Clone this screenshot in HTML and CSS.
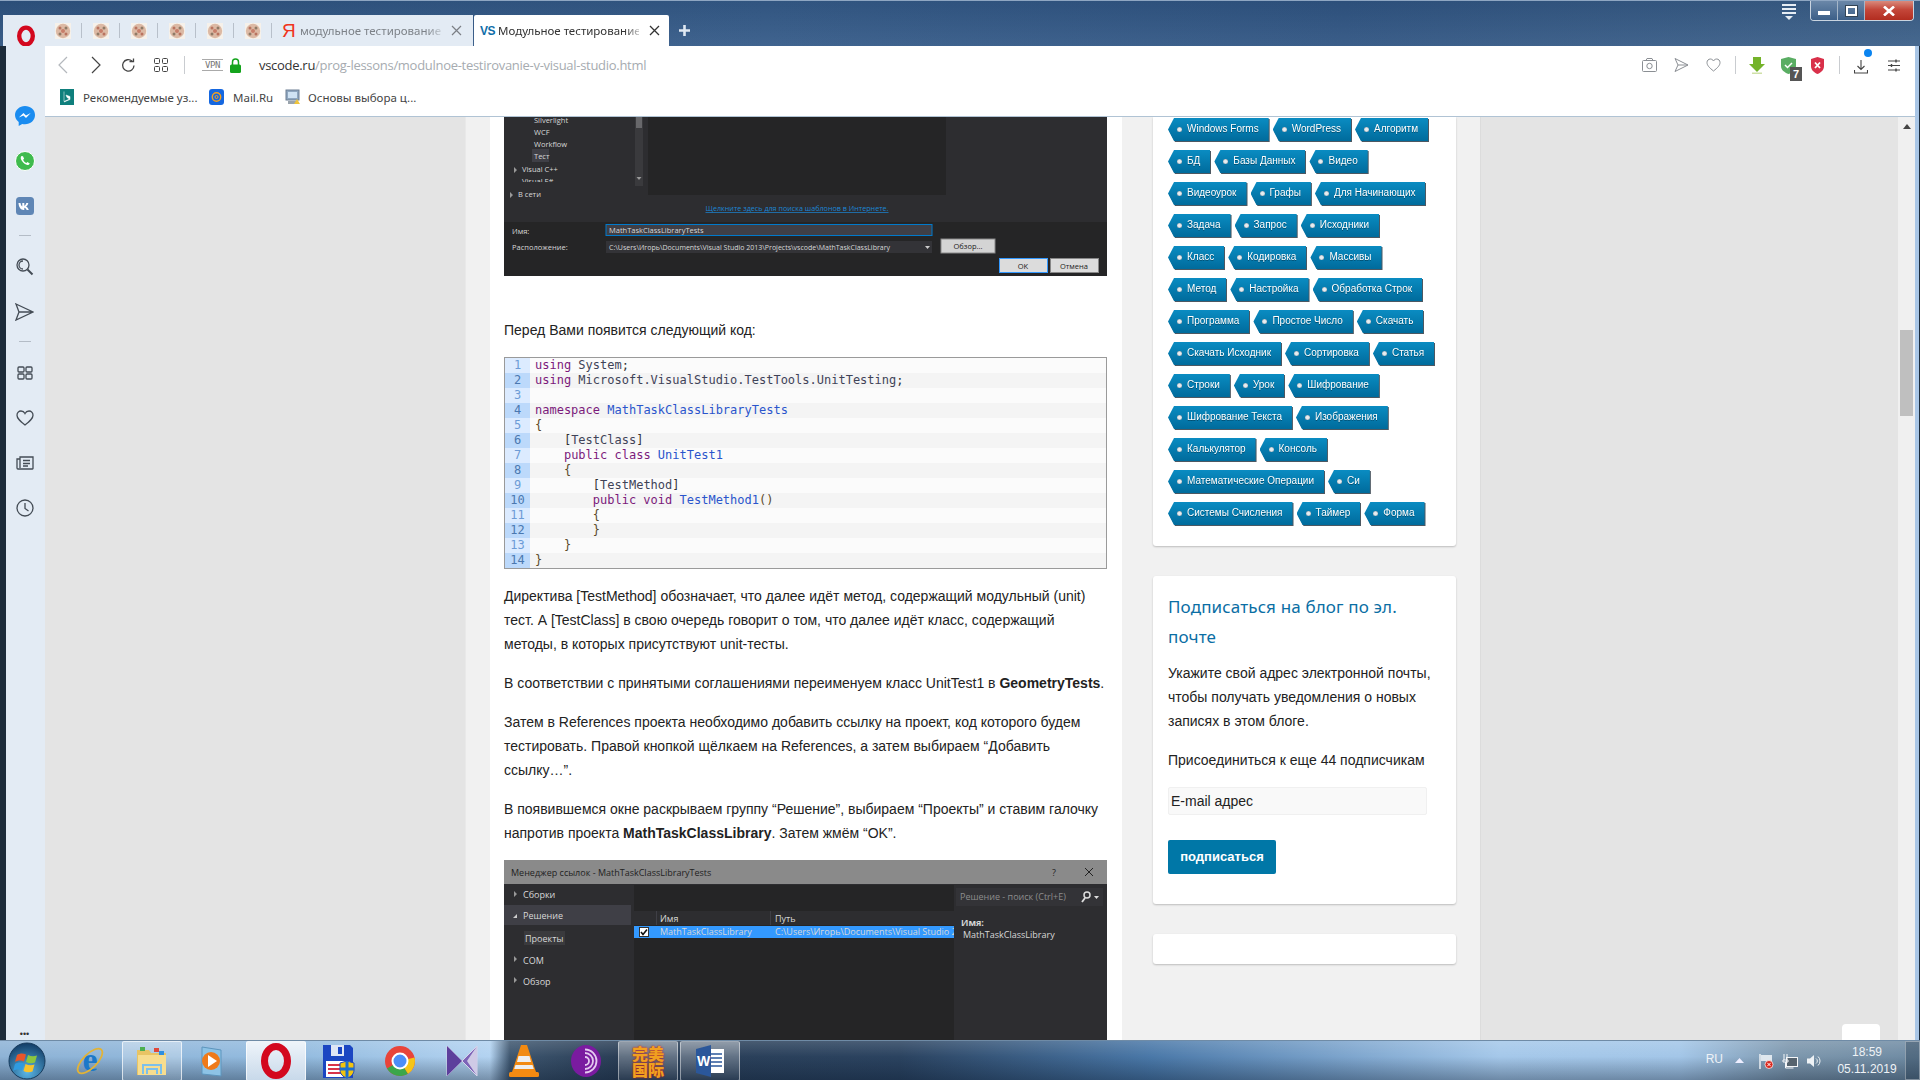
FILE: index.html
```html
<!DOCTYPE html>
<html lang="ru">
<head>
<meta charset="utf-8">
<title>Модульное тестирование</title>
<link rel="stylesheet" href="styles.css">
</head>
<body>
<svg class="defs" width="0" height="0">
  <symbol id="fav" viewBox="0 0 16 16">
    <rect width="16" height="16" fill="#f6f1ea"/>
    <circle cx="8" cy="8" r="7.200" fill="#dcb9a4"/>
    <circle cx="5" cy="5" r="1.500" fill="#b9735f"/><circle cx="11" cy="5" r="1.500" fill="#8f7a66"/>
    <circle cx="8" cy="8" r="2" fill="#c77e6a"/><circle cx="5" cy="11" r="1.500" fill="#8f7a66"/><circle cx="11" cy="11" r="1.500" fill="#b9735f"/>
  </symbol>
</svg>
<div class="window">
  <header class="head">
    <div class="strip">
      <svg class="logo" width="20" height="22" viewBox="0 0 20 22"><ellipse cx="10" cy="11" rx="6.800" ry="8.400" fill="none" stroke="#d3081e" stroke-width="4.400"/></svg>
      <div class="pin"><svg width="16" height="16"><use href="#fav"/></svg></div>
      <div class="pin"><svg width="16" height="16"><use href="#fav"/></svg></div>
      <div class="pin"><svg width="16" height="16"><use href="#fav"/></svg></div>
      <div class="pin"><svg width="16" height="16"><use href="#fav"/></svg></div>
      <div class="pin"><svg width="16" height="16"><use href="#fav"/></svg></div>
      <div class="pin"><svg width="16" height="16"><use href="#fav"/></svg></div>
      <div class="tab">
        <span class="ya">Я</span>
        <span class="tab-text muted">модульное тестирование</span>
        <svg class="tab-x" width="11" height="11" viewBox="0 0 11 11"><path d="M1 1l9 9M10 1l-9 9" stroke="#7b7f85" stroke-width="1.200"/></svg>
      </div>
      <div class="tab active">
        <span class="vs">VS</span>
        <span class="tab-text">Модульное тестирование</span>
        <svg class="tab-x" width="11" height="11" viewBox="0 0 11 11"><path d="M1 1l9 9M10 1l-9 9" stroke="#333" stroke-width="1.300"/></svg>
      </div>
      <svg class="plus" width="11" height="11" viewBox="0 0 11 11"><path d="M5.500 0v11M0 5.500h11" stroke="#dfe8f2" stroke-width="2.600"/></svg>
    </div>
    <svg class="easy" width="14" height="16" viewBox="0 0 14 16"><path d="M0 1h14M0 5h14M0 9h14" stroke="#e6edf4" stroke-width="2"/><path d="M3 12h8l-4 4z" fill="#e6edf4"/></svg>
    <div class="ctrls">
      <div class="ctl"><span class="ctl-min"></span></div>
      <div class="ctl"><span class="ctl-max"></span></div>
      <div class="ctl ctl-close"><svg width="12" height="10" viewBox="0 0 12 10"><path d="M1 0.500l10 9M11 0.500l-10 9" stroke="#fff" stroke-width="2.600"/></svg></div>
    </div>
  </header>
  <div class="below">
    <aside class="rail">
      <div class="rail-i"><svg width="20" height="20" viewBox="0 0 20 20"><path d="M10 0C4.500 0 0 4 0 9c0 2.900 1.500 5.300 3.700 7v4l3.500-2c.9.200 1.800.300 2.800.300 5.500 0 10-4 10-9.300S15.500 0 10 0z" fill="#1a8cf0"/><path d="M3.800 11.500L8.500 7l2.500 2.500L15.700 7l-4.700 5-2.500-2.500z" fill="#fff"/></svg></div>
      <div class="rail-i"><svg width="20" height="20" viewBox="0 0 20 20"><circle cx="10" cy="10" r="9.500" fill="#3fbb4e" stroke="#fff"/><path d="M6.500 5c-1.200 1.200-1 3 .5 5s3.500 3.800 5.500 4c1 .1 2-.7 2.300-1.600l-2.400-1.300-1 1c-1.500-.6-2.700-1.800-3.300-3.300l1-1L8 5.200z" fill="#fff"/></svg></div>
      <div class="rail-i"><svg width="18" height="18" viewBox="0 0 18 18"><rect width="18" height="18" rx="3.500" fill="#5f86b5"/><path d="M2.500 6h2c.3 1.700 1 3 1.800 3.500V6h2v2.800c.9-.3 1.700-1.500 2-2.800h2c-.3 1.700-1.300 3-2.300 3.600 1.200.6 2.200 1.700 2.800 3.300h-2.100c-.5-1.200-1.300-2-2.400-2.200v2.200h-.6c-3 0-4.900-2.500-5.200-6.900z" fill="#fff"/></svg></div>
      <div class="rail-sep"><span></span></div>
      <div class="rail-i rail-gap"><svg width="18" height="18" viewBox="0 0 18 18" fill="none" stroke="#444c55" stroke-width="1.300"><circle cx="7" cy="7" r="6"/><path d="M7 3a4 4 0 0 0 0 8"/><path d="M11.500 11.500l5 5" stroke-width="2"/></svg></div>
      <div class="rail-i"><svg width="19" height="18" viewBox="0 0 19 18" fill="none" stroke="#444c55" stroke-width="1.300"><path d="M1 1l17 8-17 8 3-8zM4 9h14"/></svg></div>
      <div class="rail-sep"><span></span></div>
      <div class="rail-i rail-gap"><svg width="16" height="14" viewBox="0 0 16 14" fill="none" stroke="#444c55" stroke-width="1.300"><rect x="1" y="1" width="6" height="5" rx="1"/><rect x="9" y="1" width="6" height="5" rx="1"/><rect x="1" y="8" width="6" height="5" rx="1"/><rect x="9" y="8" width="6" height="5" rx="1"/></svg></div>
      <div class="rail-i"><svg width="18" height="16" viewBox="0 0 18 16" fill="none" stroke="#444c55" stroke-width="1.300"><path d="M9 15C4 11 1 8.500 1 5.200 1 2.800 2.800 1 5 1c1.700 0 3.200 1 4 2.500C9.800 2 11.300 1 13 1c2.200 0 4 1.800 4 4.200 0 3.300-3 5.800-8 9.800z"/></svg></div>
      <div class="rail-i"><svg width="18" height="14" viewBox="0 0 18 14" fill="none" stroke="#444c55" stroke-width="1.300"><path d="M4 2.500V1h13v11.500a.5.500 0 0 1-.5.500H2a1 1 0 0 1-1-1V3h3v9"/><path d="M7 4.500h7M7 7.500h7M7 10h5"/></svg></div>
      <div class="rail-i"><svg width="18" height="18" viewBox="0 0 18 18" fill="none" stroke="#444c55" stroke-width="1.300"><circle cx="9" cy="9" r="8"/><path d="M9 4v5.500l3.500 2.500"/></svg></div>
      <div class="rail-dots">•••</div>
    </aside>
    <div class="mainpane">
      <div class="toolbar">
        <div class="addr">
          <svg class="nav nav-back" width="10" height="18" viewBox="0 0 10 18"><path d="M9 1L1 9l8 8" fill="none" stroke="#b4b8bd" stroke-width="1.200"/></svg>
          <svg class="nav nav-fwd" width="10" height="18" viewBox="0 0 10 18"><path d="M1 1l8 8-8 8" fill="none" stroke="#444" stroke-width="1.200"/></svg>
          <svg class="nav nav-rel" width="15" height="15" viewBox="0 0 15 15" fill="none" stroke="#444" stroke-width="1.300"><path d="M13 7.500A5.700 5.700 0 1 1 11 3"/><path d="M8.500 3.500h4v-3" stroke-linejoin="miter"/></svg>
          <svg class="nav nav-grid" width="14" height="14" viewBox="0 0 14 14" fill="none" stroke="#444" stroke-width="1"><rect x=".5" y=".5" width="5" height="5" rx="1"/><rect x="8.500" y=".5" width="5" height="5" rx="1"/><rect x=".5" y="8.500" width="5" height="5" rx="1"/><rect x="8.500" y="8.500" width="5" height="5" rx="1"/></svg>
          <span class="tb-sep"></span>
          <span class="vpn">VPN</span>
          <svg class="lock" width="11" height="15" viewBox="0 0 11 15"><path d="M2.500 7V4a3 3 0 0 1 6 0v3" fill="none" stroke="#14a41c" stroke-width="1.500"/><rect y="6.500" width="11" height="8.500" rx="1.500" fill="#14a41c"/></svg>
          <span class="url"><b>vscode.ru</b>/prog-lessons/modulnoe-testirovanie-v-visual-studio.html</span>
          <div class="tools">
            <svg class="t-cam" width="15" height="14" viewBox="0 0 15 14" fill="none" stroke="#8b8f94"><rect x=".5" y="2.500" width="14" height="11" rx="1"/><path d="M4 2.500L5 .5h5l1 2"/><circle cx="7.500" cy="8" r="2.700"/></svg>
            <svg class="t-send" width="15" height="14" viewBox="0 0 15 14" fill="none" stroke="#8b8f94"><path d="M1 .5l13 6.500-13 6.500 3-6.500zM4 7h10"/></svg>
            <svg class="t-heart" width="15" height="14" viewBox="0 0 15 14" fill="none" stroke="#8b8f94"><path d="M7.500 13C3.500 9.800 1 7.500 1 4.500 1 2.500 2.500 1 4.300 1c1.400 0 2.600.8 3.200 2 .6-1.200 1.800-2 3.200-2C12.500 1 14 2.500 14 4.500c0 3-2.500 5.300-6.500 8.500z"/></svg>
            <span class="tb-sep t-s1"></span>
            <svg class="t-arrow" width="16" height="17" viewBox="0 0 16 17"><path d="M4 0h8v7h4l-8 8-8-8h4z" fill="#74b32a"/><rect x="3" y="15.500" width="10" height="1.500" fill="#cfe0a8"/></svg>
            <div class="t-shield">
              <svg width="15" height="17" viewBox="0 0 15 17"><path d="M0 2l7.500-2L15 2v7c0 4-3.500 6.500-7.500 8C3.500 15.500 0 13 0 9z" fill="#5aad63"/><path d="M4 8l2.500 2.500L11 6" fill="none" stroke="#fff" stroke-width="1.500"/></svg>
              <span class="badge">7</span>
            </div>
            <svg class="t-red" width="13" height="17" viewBox="0 0 13 17"><path d="M0 2l6.500-2L13 2v7c0 4-3 6.500-6.500 8C3 15.500 0 13 0 9z" fill="#d9304a"/><path d="M4 5.500l5 5.500M9 5.500l-5 5.500" stroke="#fff" stroke-width="1.800"/></svg>
            <span class="tb-sep t-s2"></span>
            <div class="t-dl">
              <svg width="14" height="15" viewBox="0 0 14 15" fill="none" stroke="#444" stroke-width="1.100"><path d="M7 1v9M3.500 7L7 10.500 10.500 7M.5 11v3h13v-3"/></svg>
              <span class="dot"></span>
            </div>
            <svg class="t-menu" width="14" height="13" viewBox="0 0 14 13" fill="none" stroke="#444" stroke-width="1.100"><path d="M1 2h12M1 6.500h12M1 11h12"/><path d="M9 .5v3M4.500 5v3M9 9.500v3" stroke-width="1.400"/></svg>
          </div>
        </div>
        <div class="bookmarks">
          <svg class="bm-ic" width="14" height="16" viewBox="0 0 14 16"><rect width="14" height="16" fill="#0f7f7c"/><path d="M4 2.500v10l5.500-2.500-2.500-1.500-1-2.500 4 1.500v3L4 13" fill="#fff" stroke="#fff" stroke-width=".5"/></svg>
          <span class="bm-t bm-1">Рекомендуемые уз...</span>
          <svg class="bm-ic bm-mail" width="15" height="16" viewBox="0 0 15 16"><rect width="15" height="16" rx="3" fill="#1567e0"/><circle cx="7.500" cy="8" r="4.200" fill="none" stroke="#f6a01e" stroke-width="1.400"/><circle cx="7.500" cy="8" r="1.500" fill="none" stroke="#f6a01e"/></svg>
          <span class="bm-t bm-2">Mail.Ru</span>
          <svg class="bm-ic bm-pc" width="15" height="16" viewBox="0 0 15 16"><rect x="1" y="1" width="13" height="10" fill="#8fa7c0" stroke="#6c7f93"/><rect x="3" y="3" width="9" height="6" fill="#cfe2f3"/><rect x="3" y="12" width="9" height="3" fill="#9aa4ad"/><path d="M9 15l3-5 3 5z" fill="#efc43b"/></svg>
          <span class="bm-t">Основы выбора ц...</span>
        </div>
      </div>
      <div class="view">
        <div class="site">
          <main class="article">
            <svg class="shot shot-a" width="603" height="159" viewBox="0 0 603 159">
              <rect width="603" height="159" fill="#2d2d30"/>
              <rect x="144" width="298" height="78" fill="#252526"/>
              <rect x="131" width="8" height="69" fill="#3a3a3d"/><rect x="132" width="6" height="11" fill="#68686b"/>
              <path d="M132.500 60h5l-2.500 3z" fill="#999"/>
              <rect x="28" y="32" width="17" height="13" fill="#3f3f46"/>
              <g class="svt light"><text x="30" y="6">Silverlight</text><text x="30" y="18">WCF</text><text x="30" y="30">Workflow</text><text x="30" y="42">Тест</text><text x="18" y="55">Visual C++</text><text x="18" y="67">Visual F#</text><text x="14" y="80">В сети</text></g>
              <path d="M10 50l3 3-3 3zM6 75l3 3-3 3z" fill="#999"/>
              <rect y="65" width="131" height="5" fill="#2d2d30"/>
              <text class="svt link" x="293" y="94" text-anchor="middle">Щелкните здесь для поиска шаблонов в Интернете.</text>
              <rect y="105" width="603" height="54" fill="#252526"/>
              <rect x="102" y="107.500" width="326" height="11" fill="#3f3f46" stroke="#007acc"/>
              <rect x="102" y="124" width="326" height="12" fill="#333337"/>
              <path d="M421 129h5l-2.500 3z" fill="#ccc"/>
              <rect x="437" y="122" width="54" height="14" fill="#d4d4d4" stroke="#888"/>
              <rect x="495.500" y="141.500" width="48" height="14" fill="#dcdcdc" stroke="#3399ff"/>
              <rect x="546.500" y="141.500" width="48" height="14" fill="#dcdcdc" stroke="#888"/>
              <g class="svt light"><text x="8" y="117">Имя:</text><text x="8" y="133">Расположение:</text><text x="105" y="116">MathTaskClassLibraryTests</text><text class="sm" x="105" y="133">C:\Users\Игорь\Documents\Visual Studio 2013\Projects\vscode\MathTaskClassLibrary</text></g>
              <g class="svt dark"><text x="464" y="132" text-anchor="middle">Обзор...</text><text x="519" y="152" text-anchor="middle">OK</text><text x="570" y="152" text-anchor="middle">Отмена</text></g>
            </svg>
            <p class="para lead">Перед Вами появится следующий код:</p>
            <div class="code">
              <div class="ln"><span class="n">1</span><code><i class="k">using</i> <i class="u">System</i>;</code></div>
              <div class="ln"><span class="n">2</span><code><i class="k">using</i> <i class="u">Microsoft.VisualStudio.TestTools.UnitTesting</i>;</code></div>
              <div class="ln"><span class="n">3</span><code> </code></div>
              <div class="ln"><span class="n">4</span><code><i class="k">namespace</i> <i class="t">MathTaskClassLibraryTests</i></code></div>
              <div class="ln"><span class="n">5</span><code><i class="b">{</i></code></div>
              <div class="ln"><span class="n">6</span><code>    [<i class="u">TestClass</i>]</code></div>
              <div class="ln"><span class="n">7</span><code>    <i class="k">public class</i> <i class="t">UnitTest1</i></code></div>
              <div class="ln"><span class="n">8</span><code>    <i class="b">{</i></code></div>
              <div class="ln"><span class="n">9</span><code>        [<i class="u">TestMethod</i>]</code></div>
              <div class="ln"><span class="n">10</span><code>        <i class="k">public void</i> <i class="t">TestMethod1</i><i class="b">()</i></code></div>
              <div class="ln"><span class="n">11</span><code>        <i class="b">{</i></code></div>
              <div class="ln"><span class="n">12</span><code>        <i class="b">}</i></code></div>
              <div class="ln"><span class="n">13</span><code>    <i class="b">}</i></code></div>
              <div class="ln"><span class="n">14</span><code><i class="b">}</i></code></div>
            </div>
            <p class="para">Директива [TestMethod] обозначает, что далее идёт метод, содержащий модульный (unit) тест. А [TestClass] в свою очередь говорит о том, что далее идёт класс, содержащий методы, в которых присутствуют unit-тесты.</p>
            <p class="para">В соответствии с принятыми соглашениями переименуем класс UnitTest1 в <b>GeometryTests</b>.</p>
            <p class="para">Затем в References проекта необходимо добавить ссылку на проект, код которого будем тестировать. Правой кнопкой щёлкаем на References, а затем выбираем “Добавить ссылку…”.</p>
            <p class="para">В появившемся окне раскрываем группу “Решение”, выбираем “Проекты” и ставим галочку напротив проекта <b>MathTaskClassLibrary</b>. Затем жмём “OK”.</p>
            <svg class="shot" width="603" height="180" viewBox="0 0 603 180">
              <rect width="603" height="180" fill="#2d2d30"/>
              <rect width="603" height="24" fill="#8a8a8a"/>
              <text class="svt dark big" x="7" y="16">Менеджер ссылок - MathTaskClassLibraryTests</text>
              <text class="svt dark big" x="550" y="16" text-anchor="middle">?</text>
              <path d="M581 8l8 8M589 8l-8 8" stroke="#222"/>
              <rect y="45" width="127" height="20" fill="#3f3f46"/>
              <rect x="20" y="71" width="41" height="14" fill="#3a3a3d"/>
              <rect x="130" y="25" width="320" height="155" fill="#252526"/>
              <rect x="130" y="51" width="320" height="14" fill="#2d2d30"/>
              <rect x="130" y="66" width="320" height="12" fill="#3399ff"/>
              <rect x="152" y="51" width="1" height="14" fill="#3f3f46"/><rect x="266" y="51" width="1" height="14" fill="#3f3f46"/>
              <rect x="135.500" y="67.500" width="9" height="9" fill="#fff" stroke="#333"/>
              <path d="M137 72l2 2.500 4-5" fill="none" stroke="#111" stroke-width="1.600"/>
              <rect x="452" y="28" width="147" height="18" fill="#333337"/>
              <path d="M10 31l3 3-3 3zM10 96l3 3-3 3zM10 117l3 3-3 3z" fill="#999"/><path d="M9 58l4-4v4z" fill="#ccc"/>
              <g class="svt light big"><text x="19" y="38">Сборки</text><text x="19" y="59">Решение</text><text x="21" y="82">Проекты</text><text x="19" y="104">COM</text><text x="19" y="125">Обзор</text><text x="156" y="62">Имя</text><text x="271" y="62">Путь</text><text x="156" y="75">MathTaskClassLibrary</text><text x="459" y="78">MathTaskClassLibrary</text></g>
              <svg x="271" y="66" width="179" height="12"><text class="svt light big" x="0" y="9">C:\Users\Игорь\Documents\Visual Studio 2013</text></svg>
              <text class="svt gray big" x="456" y="40">Решение - поиск (Ctrl+E)</text>
              <text class="svt light big bold" x="457" y="66">Имя:</text>
              <circle cx="583" cy="35" r="3" fill="none" stroke="#ddd" stroke-width="1.500"/><path d="M581 38l-3 4" stroke="#ddd" stroke-width="1.800"/><path d="M590 36h5l-2.500 3z" fill="#ddd"/>
            </svg>
          </main>
          <aside class="side">
            <section class="card tags">
              <div class="tag-row"><a class="tag">Windows Forms</a><a class="tag">WordPress</a><a class="tag">Алгоритм</a></div>
              <div class="tag-row"><a class="tag">БД</a><a class="tag">Базы Данных</a><a class="tag">Видео</a></div>
              <div class="tag-row"><a class="tag">Видеоурок</a><a class="tag">Графы</a><a class="tag">Для Начинающих</a></div>
              <div class="tag-row"><a class="tag">Задача</a><a class="tag">Запрос</a><a class="tag">Исходники</a></div>
              <div class="tag-row"><a class="tag">Класс</a><a class="tag">Кодировка</a><a class="tag">Массивы</a></div>
              <div class="tag-row"><a class="tag">Метод</a><a class="tag">Настройка</a><a class="tag">Обработка Строк</a></div>
              <div class="tag-row"><a class="tag">Программа</a><a class="tag">Простое Число</a><a class="tag">Скачать</a></div>
              <div class="tag-row"><a class="tag">Скачать Исходник</a><a class="tag">Сортировка</a><a class="tag">Статья</a></div>
              <div class="tag-row"><a class="tag">Строки</a><a class="tag">Урок</a><a class="tag">Шифрование</a></div>
              <div class="tag-row"><a class="tag">Шифрование Текста</a><a class="tag">Изображения</a></div>
              <div class="tag-row"><a class="tag">Калькулятор</a><a class="tag">Консоль</a></div>
              <div class="tag-row"><a class="tag">Математические Операции</a><a class="tag">Си</a></div>
              <div class="tag-row"><a class="tag">Системы Счисления</a><a class="tag">Таймер</a><a class="tag">Форма</a></div>
            </section>
            <section class="card sub">
              <h3 class="sub-title">Подписаться на блог по эл. почте</h3>
              <p class="sub-text">Укажите свой адрес электронной почты, чтобы получать уведомления о новых записях в этом блоге.</p>
              <p class="sub-text">Присоединиться к еще 44 подписчикам</p>
              <div class="sub-input">E-mail адрес</div>
              <div class="sub-btn">подписаться</div>
            </section>
            <section class="card blank"></section>
          </aside>
        </div>
        <div class="gutter"></div>
        <div class="scroll">
          <svg class="sc-up" width="8" height="5" viewBox="0 0 8 5"><path d="M0 5l4-5 4 5z" fill="#444"/></svg>
          <div class="sc-thumb"></div>
        </div>
        <div class="float"></div>
      </div>
    </div>
    <div class="edge"></div>
  </div>
</div>
<footer class="taskbar">
  <div class="orb"><svg width="40" height="40" viewBox="0 0 40 40"><defs><radialGradient id="orbg" cx=".5" cy=".8" r=".8"><stop offset="0" stop-color="#5bb8e8"/><stop offset="1" stop-color="#123c66"/></radialGradient></defs><circle cx="20" cy="20" r="18" fill="url(#orbg)" stroke="#173b5c"/><path d="M10 14c3-2 6-2 9-.5l-2 7c-3-1.500-6-1.500-9 .5z" fill="#e8562a"/><path d="M21 14c3 1.500 6 1.500 9 .5l-2 7c-3 1-6 1-9-.5z" fill="#8cc63f"/><path d="M8 23c3-2 6-2 9-.5l-2 7c-3-1.500-6-1.500-9 .5z" fill="#2f9be0"/><path d="M18.500 23c3 1.500 6 1.500 9 .5l-2 7c-3 1-6 1-9-.5z" fill="#f8c32c"/></svg></div>
  <div class="app"><svg width="34" height="34" viewBox="0 0 34 34"><text class="ie" x="17" y="27" text-anchor="middle">e</text><ellipse cx="17" cy="17" rx="16" ry="7" transform="rotate(-45 17 17)" fill="none" stroke="#e3b335" stroke-width="1.800"/></svg></div>
  <div class="app on-dim"><svg width="34" height="34" viewBox="0 0 34 34"><path d="M2 6h12l2 3h15v22H2z" fill="#e8c464"/><rect x="3" y="11" width="28" height="20" fill="#f7dd8f"/><rect x="5" y="3" width="5" height="4" fill="#4caf50"/><rect x="19" y="4" width="5" height="4" fill="#e0483a"/><rect x="24" y="7" width="5" height="4" fill="#2f8fe0"/><path d="M8 30V21h18v9M12 30v-5h10v5" fill="none" stroke="#7cc0ea" stroke-width="2"/></svg></div>
  <div class="app"><svg width="34" height="34" viewBox="0 0 34 34"><path d="M5 3l19 3v26L5 30z" fill="#8dc3e6" stroke="#5d95bd"/><circle cx="14" cy="17" r="9" fill="#ef7a1a"/><path d="M11 11l9 6-9 6z" fill="#fff"/></svg></div>
  <div class="app on"><svg width="34" height="36" viewBox="0 0 34 36"><ellipse cx="17" cy="18" rx="11.500" ry="14.500" fill="none" stroke="#d3081e" stroke-width="7"/></svg></div>
  <div class="app"><svg width="34" height="36" viewBox="0 0 34 36"><path d="M2 2h27l3 3v30H2z" fill="#1b46c2"/><rect x="10" y="2" width="13" height="11" fill="#dfe6f5"/><rect x="17" y="4" width="4" height="7" fill="#1b46c2"/><rect x="5" y="18" width="24" height="16" fill="#fff"/><path d="M7 22h13M7 26h13M7 30h13" stroke="#d8344a" stroke-width="2"/><path d="M19 20l7-2 7 2v7c0 4-3 7-7 8-4-1-7-4-7-8z" fill="#f1c40f" stroke="#1b46c2"/><path d="M26 18v17M19 26h14" stroke="#1b6fd0" stroke-width="3"/></svg></div>
  <div class="app"><svg width="32" height="32" viewBox="0 0 32 32"><circle cx="16" cy="16" r="15" fill="#e8443a"/><path d="M3 23.500A15 15 0 0 0 24 28.700L16 16z" fill="#3ba64a"/><path d="M16 16l14.500 -3.500A15 15 0 0 1 24 28.700z" fill="#f5c518"/><circle cx="16" cy="16" r="7.500" fill="#4c8df6" stroke="#fff" stroke-width="2"/></svg></div>
  <div class="app"><svg width="34" height="34" viewBox="0 0 34 34"><path d="M2 2l15 15 15-15v30L17 17 2 32z" fill="#7d64b8" stroke="#d8d4ea"/><path d="M2 2l15 15L2 32z" fill="#5d3f9c"/><path d="M32 2v30L22 17z" fill="#cfcae6"/></svg></div>
  <div class="app"><svg width="30" height="34" viewBox="0 0 30 34"><path d="M12 1h6l9 27H3z" fill="#f28a12"/><path d="M9.500 12h11l1.500 6H8zM6.500 21h17l1.300 4H5.200z" fill="#eee"/><rect y="28" width="30" height="5" rx="1.500" fill="#f28a12"/></svg></div>
  <div class="app"><svg width="34" height="34" viewBox="0 0 34 34"><ellipse cx="17" cy="17" rx="15" ry="16" fill="#7a1ba0"/><path d="M16 9a8 8 0 0 1 0 16M16 5.500a11.500 11.500 0 0 1 0 23M16 13a4 4 0 0 1 0 8" fill="none" stroke="#e4c9f0" stroke-width="1.800"/></svg></div>
  <div class="app on-dark"><span class="game">完美<br>国际</span></div>
  <div class="app on-dark"><svg width="28" height="34" viewBox="0 0 28 34"><rect x="12" y="5" width="16" height="24" fill="#fff"/><path d="M15 10h11M15 14h11M15 18h11M15 22h11" stroke="#2b579a" stroke-width="1.500"/><path d="M0 5l15-4v32L0 29z" fill="#2b579a"/><text class="wd" x="7.500" y="22" text-anchor="middle">W</text></svg></div>
  <div class="tray">
    <span class="lang">RU</span>
    <svg class="tr-up" width="9" height="5" viewBox="0 0 9 5"><path d="M0 5l4.500-5L9 5z" fill="#eef"/></svg>
    <svg class="tr-i" width="16" height="16" viewBox="0 0 16 16"><path d="M2 1v15" stroke="#f4f6f8" stroke-width="1.400"/><path d="M3 2h11v6H3z" fill="#dfe7ee"/><circle cx="11" cy="11.500" r="4" fill="#d9261c" stroke="#fff" stroke-width=".7"/><path d="M9.300 9.800l3.400 3.400M12.700 9.800l-3.400 3.400" stroke="#fff"/></svg>
    <svg class="tr-i" width="16" height="16" viewBox="0 0 16 16"><rect x="4.500" y="4.500" width="11" height="9" fill="#56636e" stroke="#f4f6f8"/><path d="M2 1v6M5 1v6M1 7h5v2H1zM3.500 9v6h8" stroke="#f4f6f8" fill="none"/></svg>
    <svg class="tr-i" width="16" height="16" viewBox="0 0 16 16"><path d="M1 5.500h3L8 2v12l-4-3.500H1z" fill="#eef2f5"/><path d="M10 5.500a3 3 0 0 1 0 5M12 3.500a6 6 0 0 1 0 9" fill="none" stroke="#eef2f5"/></svg>
    <div class="clock"><span>18:59</span><span>05.11.2019</span></div>
    <div class="desk"></div>
  </div>
</footer>
</body>
</html>
```

FILE: styles.css
```css
* { box-sizing: border-box; }
html, body { margin: 0; padding: 0; width: 1920px; height: 1080px; overflow: hidden; }
body { font-family: "Liberation Sans", Arial, sans-serif; color: #222; background: #2f5280; }
.defs { position: absolute; }

.window { height: 1040px; display: flex; flex-direction: column; }
.head { height: 46px; flex: none; display: flex; align-items: flex-start; border-top: 1px solid #8ea6c2; background: linear-gradient(180deg, rgba(0,0,0,.06), rgba(255,255,255,.06)), linear-gradient(90deg, #2e5380, #345a88 40%, #2f5482 70%, #3b5f88); }
.strip { margin-top: 14px; margin-left: 3px; width: 760px; height: 31px; display: flex; align-items: center; padding-left: 13px; background: linear-gradient(90deg, #e3ebf4 0, #e3ebf4 470px, transparent 470px); }
.logo { width: 20px; margin-right: 17px; margin-top: 10px; flex: none; }
.pin { width: 38px; height: 31px; display: flex; align-items: center; justify-content: center; position: relative; margin-left: -9px; margin-right: 9px; flex: none; }
.pin::after { content: ""; position: absolute; right: 0; top: 8px; height: 15px; width: 1px; background: #b8c0ca; }
.tab { height: 31px; display: flex; align-items: center; margin-left: -5px; width: 198px; padding-left: 6px; flex: none; }
.tab.active { background: #fff; width: 195px; margin-left: 0; padding-left: 6px; border-radius: 2px 2px 0 0; color: #333; }
.ya { color: #f0341c; font-size: 19px; width: 16px; font-family: "Liberation Sans", sans-serif; margin-right: 2px; }
.vs { color: #0f6ea8; font-weight: 700; font-size: 12px; width: 16px; font-family: "Liberation Sans", sans-serif; margin-right: 2px; letter-spacing: -.5px; }
.tab-text { width: 141px; white-space: nowrap; font-family: "Noto Sans", sans-serif; font-size: 11.500px; -webkit-mask-image: linear-gradient(90deg, #000 90%, rgba(0,0,0,.25)); mask-image: linear-gradient(90deg, #000 90%, rgba(0,0,0,.25)); }
.muted { color: #7d8288; }
.tab-x { margin-left: 10px; }
.plus { margin-left: 10px; flex: none; }
.easy { margin-left: auto; margin-top: 3px; margin-right: 14px; }
.ctrls { display: flex; height: 20px; width: 104px; margin-right: 6px; border: 1px solid #c9d4e0; border-top: 0; border-radius: 0 0 4px 4px; overflow: hidden; }
.ctl { width: 27px; display: flex; align-items: center; justify-content: center; background: linear-gradient(#6a87a8, #3c5f88); border-right: 1px solid #a5b6c8; }
.ctl-close { flex: 1; background: linear-gradient(#d98a7c 0, #c4473a 45%, #b22d20); border: 0; }
.ctl-min { width: 12px; height: 4px; background: #fff; margin-top: 4px; }
.ctl-max { width: 11px; height: 10px; border: 2px solid #fff; outline: 1px solid #345; }

.below { flex: 1; display: flex; min-height: 0; }
.rail { width: 45px; flex: none; display: flex; flex-direction: column; padding: 47px 2px 0 0; background: #e3ebf4; border-left: 6px solid; border-image: linear-gradient(90deg, #1d2b3a 0 2px, #a9c6e6 2px) 1; }
.rail-i { height: 45px; display: flex; align-items: center; justify-content: center; flex: none; }
.rail-gap { margin-top: 1px; }
.rail-sep { height: 15px; display: flex; align-items: center; justify-content: center; flex: none; }
.rail-sep span { width: 12px; height: 1px; background: #b4bcc6; }
.rail-dots { margin-top: auto; font-size: 9px; text-align: center; color: #333; line-height: 12px; }

.mainpane { flex: 1; display: flex; flex-direction: column; min-width: 0; }
.edge { width: 5px; flex: none; background: linear-gradient(90deg, #a9c6e6 0 4px, #1d2b3a 4px); }

.toolbar { height: 71px; flex: none; background: #fff; border-bottom: 1px solid #b0c3d4; }
.addr { height: 38px; display: flex; align-items: center; padding-left: 13px; }
.nav-fwd { margin-left: 23px; }
.nav-rel { margin-left: 20px; }
.nav-grid { margin-left: 18px; }
.tb-sep { width: 1px; height: 18px; background: #c9ccd0; }
.addr > .tb-sep { margin-left: 16px; }
.vpn { margin-left: 17px; width: 21px; font: 9px "DejaVu Sans Mono", monospace; letter-spacing: -.5px; color: #777; border-top: 1px solid #aaa; border-bottom: 1px solid #aaa; line-height: 10px; text-align: center; }
.lock { margin-left: 7px; }
.url { margin-left: 18px; font: 13px "Open Sans", sans-serif; letter-spacing: -.29px; color: #a6abb0; white-space: nowrap; }
.url b { font-weight: 400; color: #333; }
.tools { margin-left: auto; display: flex; align-items: center; padding-right: 14px; }
.t-send { margin-left: 17px; }
.t-heart { margin-left: 17px; }
.t-s1 { margin-left: 14px; }
.t-arrow { margin-left: 13px; }
.t-shield { margin-left: 16px; position: relative; height: 17px; }
.badge { position: absolute; left: 9px; top: 10px; width: 12px; height: 14px; background: #555; color: #fff; font: 700 11px/14px "Liberation Sans", sans-serif; text-align: center; }
.t-red { margin-left: 15px; }
.t-s2 { margin-left: 15px; }
.t-dl { margin-left: 14px; position: relative; height: 15px; margin-top: 2px; }
.dot { position: absolute; left: 10px; top: -10px; width: 8px; height: 8px; border-radius: 50%; background: #0a84f0; }
.t-menu { margin-left: 19px; }

.bookmarks { height: 26px; display: flex; align-items: center; padding-left: 15px; font: 11.500px "Noto Sans", sans-serif; color: #444; }
.bm-t { margin-left: 9px; white-space: nowrap; }
.bm-1 { width: 113px; }
.bm-mail { margin-left: 13px; }
.bm-2 { width: 39px; }
.bm-pc { margin-left: 13px; }
.bm-t:last-child { margin-left: 8px; }

.view { flex: 1; position: relative; display: flex; padding-left: 420px; background: #e4e4e4; min-height: 0; overflow: hidden; }
.site { width: 1016px; flex: none; display: flex; padding-left: 24px; background: #f1f1f1; border-left: 1px solid #e9e9e9; border-right: 1px solid #dcdcdc; align-items: stretch; }
.article { width: 632px; flex: none; padding: 0 15px 0 14px; background: #fff; overflow: hidden; }
.gutter { flex: 1; }
.scroll { width: 17px; flex: none; background: #f0f0f0; display: flex; flex-direction: column; align-items: center; padding-top: 7px; }
.sc-thumb { width: 13px; height: 86px; margin-top: 201px; background: #bfbfbf; }
.float { position: absolute; left: 1797px; top: 907px; width: 38px; height: 16px; background: #fff; border-radius: 4px 4px 0 0; }

.shot { display: block; }
.shot-a { margin-bottom: 42px; }
.svt { font-family: "Open Sans", sans-serif; font-size: 7.500px; }
.svt text { font-size: 7.500px; }
.svt .sm { font-size: 7px; }
.big, .big text { font-size: 9px; }
.light { fill: #d8d8d8; }
.dark { fill: #222; }
.gray { fill: #8d8d8d; }
.bold { font-weight: 700; }
.link { fill: #1c86d4; text-decoration: underline; font-size: 7.200px; }

.para { margin: 0 0 15px; font-size: 14px; line-height: 24px; color: #222; }
.code { height: 212px; margin-bottom: 15px; border: 1px solid #9a9a9a; overflow: hidden; }
.ln { display: flex; height: 15px; background: #fbfbfb; }
.ln:nth-child(even) { background: #f4f4f4; }
.n { width: 25px; flex: none; text-align: center; font: 12px/15px "DejaVu Sans Mono", monospace; color: #6d9bd6; background: #dcebff; }
.ln:nth-child(even) .n { background: #bcd9fb; color: #4a78b0; }
.ln code { padding-left: 5px; font: 12px/15px "DejaVu Sans Mono", monospace; white-space: pre; color: #333; }
.ln i { font-style: normal; }
.k { color: #7b1a7b; }
.t { color: #2a55cc; }
.u { color: #3f4358; }
.b { color: #5a4a2a; }

.side { width: 303px; flex: none; margin-left: 31px; display: flex; flex-direction: column; gap: 30px; }
.card { background: #fff; border-radius: 0 0 3px 3px; box-shadow: 0 1px 2px rgba(0,0,0,.22); }
.tags { height: 429px; padding: 1px 0 0 15px; }
.tag-row { display: flex; gap: 4px; margin-bottom: 9px; filter: drop-shadow(1px 1px 0 #4c5862); }
.tag { position: relative; height: 23px; padding: 0 10px 0 19px; font-size: 10px; line-height: 21px; color: #fff; white-space: nowrap; text-shadow: 0 1px 0 rgba(0,0,0,.35); background: linear-gradient(#0a8cc2, #006b9c); clip-path: polygon(6px 0, 100% 0, 100% 100%, 6px 100%, 0 50%); }
.tag::before { content: ""; position: absolute; left: 9px; top: 9px; width: 5px; height: 5px; border-radius: 50%; background: #e8eef2; box-shadow: inset 0 0 1px #345; }
.sub { height: 328px; padding: 16px 15px 0; border-radius: 3px; }
.sub-title { margin: 0 0 9px; font: 400 17px/30px "Noto Sans", sans-serif; color: #0a6ea4; letter-spacing: .15px; }
.sub-text { margin: 0 0 15px; font-size: 14px; line-height: 24px; color: #222; }
.sub-input { width: 259px; height: 28px; margin-bottom: 25px; padding-left: 2px; background: #f9f9f9; border: 1px solid #f0f0f0; border-radius: 2px; font-size: 14px; line-height: 26px; color: #222; }
.sub-btn { width: 108px; height: 34px; background: #0077a7; border-radius: 2px; color: #fff; font: 700 13px/34px "Liberation Sans", sans-serif; text-align: center; }
.blank { height: 30px; border-radius: 3px; }

.taskbar { height: 40px; display: flex; align-items: center; border-top: 1px solid #6f8ba6; background: linear-gradient(180deg, rgba(255,255,255,.14), rgba(255,255,255,0) 40%, rgba(5,20,40,.35) 100%), linear-gradient(90deg, #8eb3d6 0, #93bbdf 300px, #b3d3f1 490px, #3e566f 510px, #2a3e56 620px, #2b4360 900px, #4a78a8 1150px, #a5c8ea 1500px, #a3c6e8 1680px, #7d97ad 1790px, #6f8ba3 1920px); }
.orb { width: 59px; flex: none; padding-left: 7px; display: flex; }
.app { width: 62px; height: 40px; flex: none; display: flex; align-items: center; justify-content: center; }
.app.on-dim, .app.on, .app.on-dark { border: 1px solid rgba(255,255,255,.7); border-radius: 2px; width: 60px; margin: 0 1px; }
.app.on-dim { background: linear-gradient(rgba(255,255,255,.35), rgba(255,255,255,.12)); }
.app.on { background: linear-gradient(#eef4fa, #c8d9ea); }
.app.on-dark { background: linear-gradient(rgba(255,255,255,.4), rgba(255,255,255,.06)); border-color: rgba(255,255,255,.45); }
.ie { font: 700 34px "Liberation Serif", serif; fill: #1c78c8; }
.wd { font: 700 14px "Liberation Sans", sans-serif; fill: #fff; }
.game { font: 900 16px/16px "Noto Sans CJK SC", sans-serif; color: #f0a020; text-align: center; text-shadow: 0 0 2px #c01010; }
.tray { flex: 1; display: flex; align-items: center; justify-content: flex-end; height: 100%; color: #eef2f6; }
.lang { font: 12px "Liberation Sans", sans-serif; margin-right: 12px; margin-bottom: 3px; }
.tr-up { margin-right: 14px; }
.tr-i { margin-right: 8px; }
.clock { width: 74px; display: flex; flex-direction: column; align-items: center; font: 12px/17px "Liberation Sans", sans-serif; margin-right: 1px; }
.desk { width: 15px; height: 100%; border: 1px solid rgba(255,255,255,.35); background: rgba(30,50,70,.35); }
```
